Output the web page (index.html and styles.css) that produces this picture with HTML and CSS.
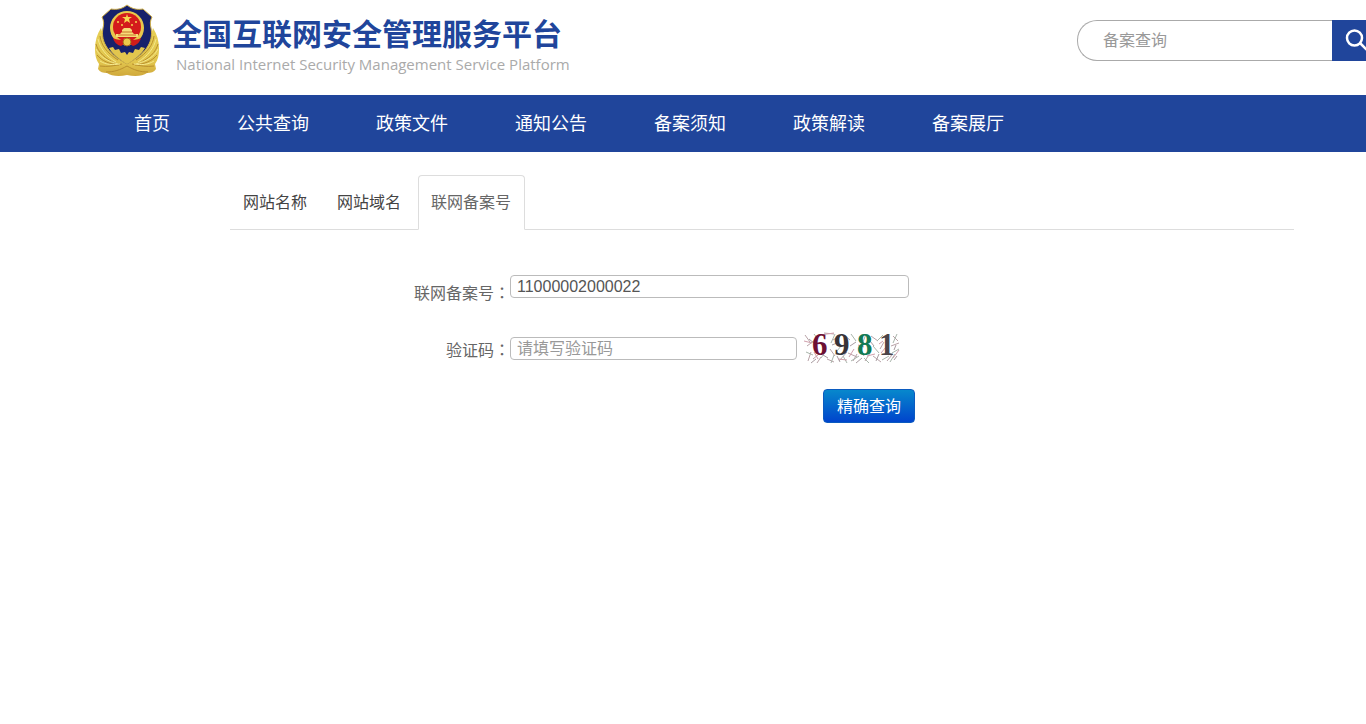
FILE: index.html
```html
<!DOCTYPE html>
<html lang="zh-CN">
<head>
  <meta charset="utf-8">
  <title>全国互联网安全管理服务平台</title>
  <link rel="stylesheet" href="styles.css">
</head>
<body>
  <header class="header">
    <a class="logo" href="#">
      <svg class="emblem" viewBox="0 0 66 74" aria-hidden="true">
        <defs>
          <linearGradient id="gold" x1="0" y1="0" x2="0" y2="1">
            <stop offset="0" stop-color="#e6cf55"/>
            <stop offset="0.7" stop-color="#e2c64e"/>
            <stop offset="1" stop-color="#d0a93c"/>
          </linearGradient>
        </defs>
        <!-- branches -->
        <path d="M7 24C3 30 1 37 1 45c0 6 1 11 4 15l-1 5c2 3 5 4 9 4 4 3 12 4 20 2 8 2 16 1 20-2 4 0 7-1 9-4l-1-5c3-4 4-9 4-15 0-8-2-15-6-21l-5 18-21 18-21-18z" fill="url(#gold)"/>
        <g fill="none" stroke="#b98f2e" stroke-width="1">
          <path d="M6 32c1 9 7 17 18 24M2 40c2 8 9 15 21 20M3 51c5 6 12 9 22 10M6 62c7 1 14 0 22-2M12 68c8 0 14-2 21-6"/>
          <path d="M60 32c-1 9-7 17-18 24M64 40c-2 8-9 15-21 20M63 51c-5 6-12 9-22 10M60 62c-7 1-14 0-22-2M54 68c-8 0-14-2-21-6"/>
        </g>
        <g fill="none" stroke="#f5e88c" stroke-width="1">
          <path d="M4 35c2 9 8 17 18 23M2 45c4 8 11 12 22 15M6 57c6 4 13 4 20 3"/>
          <path d="M62 35c-2 9-8 17-18 23M64 45c-4 8-11 12-22 15M60 57c-6 4-13 4-20 3"/>
        </g>
        <!-- shield -->
        <path d="M33 1c5 4 10 5 16 4l9 8c-2 4-2 7-1 11 3 15-7 27-24 36C16 51 6 39 9 24c1-4 1-7-1-11l9-8c6 1 11 0 16-4z" fill="#17216b" stroke="#cfae45" stroke-width="1"/>
        <path d="M15 44l4-1 2 3 4-1 2 4 4-1 2 3 2-3 4 1 2-4 4 1 2-3 4 1c-4 7-10 11-18 16-8-5-14-9-18-16z" fill="#e2c64e"/>
        <circle cx="33" cy="24" r="17" fill="#e8c84c"/>
        <circle cx="33" cy="23" r="14" fill="#d41a1c"/>
        <path d="M33 10l1 3h4l-3 2 1 4-3-2-3 2 1-4-3-2h4z" fill="#f6d650"/>
        <g fill="#f6d650">
          <circle cx="24" cy="18" r="1"/><circle cx="28" cy="21" r="1"/>
          <circle cx="38" cy="21" r="1"/><circle cx="42" cy="18" r="1"/>
        </g>
        <path d="M22 33v-3h4l2-2v-2l2-2h6l2 2v2l2 2h4v3z" fill="#f7dc78"/>
        <path d="M28 28h10M24 31h18" stroke="#c9762c" stroke-width="1"/>
        <path d="M19 34c4 2 7 2 10 1h8c3 1 6 1 10-1-1 4-4 7-8 8l-3-2h-6l-3 2c-4-1-7-4-8-8z" fill="#cf1c1b"/>
        <circle cx="33" cy="38" r="4" fill="#edc94b" stroke="#a66c19"/>
      </svg>
      <span class="logo-text">
        <span class="logo-cn">全国互联网安全管理服务平台</span>
        <span class="logo-en">National Internet Security Management Service Platform</span>
      </span>
    </a>
    <form class="search">
      <input class="search-input" type="text" placeholder="备案查询" aria-label="备案查询">
      <button class="search-btn" type="button" aria-label="搜索">
        <svg width="24" height="24" viewBox="0 0 24 24" fill="none" stroke="#fff" stroke-width="2.500">
          <circle cx="9.500" cy="10" r="7.500"/>
          <path d="M15 15l7 7"/>
        </svg>
      </button>
    </form>
  </header>

  <nav class="nav">
    <a href="#">首页</a>
    <a href="#">公共查询</a>
    <a href="#">政策文件</a>
    <a href="#">通知公告</a>
    <a href="#">备案须知</a>
    <a href="#">政策解读</a>
    <a href="#">备案展厅</a>
  </nav>

  <main class="main">
    <div class="tabs">
      <a class="tab" href="#">网站名称</a>
      <a class="tab" href="#">网站域名</a>
      <a class="tab active" href="#">联网备案号</a>
    </div>

    <form class="query">
      <div class="row">
        <label for="recordcode">联网备案号<span class="colon" lang="zh-TW">：</span></label>
        <input class="text" id="recordcode" type="text" value="11000002000022">
      </div>
      <div class="row">
        <label for="ver">验证码<span class="colon" lang="zh-TW">：</span></label>
        <input class="text text-code" id="ver" type="text" placeholder="请填写验证码">
        <svg class="captcha" viewBox="0 0 96 32" role="img" aria-label="验证码图片">
          <g fill="none" stroke-width="1">
            <path stroke="#b9a3a8" d="M1 3l5 7M3 14l8-6M4 29l3-9M9 27l6-5M20 1l10 1M13 31l4-6M23 27l7 3M29 8l7-4M26 17l5 7M35 29l8-9M40 3l6 5M49 29l4-7M44 21l9 4M56 4l4 8M61 29l5-8M67 4l7 5M69 24l8 6M76 17l4-7M83 29l5-6M89 4l5 5M87 14l8-3"/>
            <path stroke="#a9b5ab" d="M2 20l7 3M10 2l4 5M17 26l5-7M27 31l3-8M31 2l-4 9M38 13l-6 7M43 31l-4-7M47 2l5 7M55 24l-8 5M62 2l-3 8M65 31l-5-5M69 14l6 7M79 3l-6 6M78 28l7-4M84 3l-2 7M91 22l-5 8M93 2l-4 9M95 17l-7 4"/>
            <path stroke="#a89ca1" d="M5 7l6 5M7 31l5-4M19 23l5 3M28 13l5-2M33 24l3 6M46 14l6-4M52 31l6-5M57 18l3 6M66 9l4 5M72 29l3-7M81 21l6 2M92 13l-2 5M90 28l3-4"/>
            <path stroke="#d0a0ac" d="M0 9l8 2M16 3l14-2M10 20l4 7M34 27l9 1M45 25l5-8M54 13l6 2M63 24l8-2M75 12l4-3M82 15l-5 6M89 26l6-8"/>
          </g>
          <g class="digits">
            <text x="8" y="23" fill="#6d1034">6</text>
            <text x="30" y="23" fill="#383438">9</text>
            <text x="53" y="23" fill="#127a55">8</text>
            <text x="75" y="23" fill="#4b4448">1</text>
          </g>
        </svg>
      </div>
      <div class="actions">
        <button class="btn" type="button">精确查询</button>
      </div>
    </form>
  </main>
</body>
</html>
```

FILE: styles.css
```css
* {
    box-sizing: border-box;
}

body {
    margin: 0;
    overflow-x: hidden;
    background: #fff;
    color: #666;
    font-family: "Liberation Sans", "Noto Sans CJK SC", sans-serif;
    font-size: 16px;
    line-height: 24px;
}

a {
    color: inherit;
    text-decoration: none;
}

input,
button {
    font: inherit;
}

/* header */
.header {
    display: flex;
    justify-content: space-between;
    align-items: flex-start;
    min-width: 1382px;
    height: 95px;
    padding-left: 94px;
}

.logo {
    display: flex;
    gap: 12px;
    padding-top: 4px;
}

.emblem {
    width: 66px;
    height: 74px;
}

.logo-text {
    display: flex;
    flex-direction: column;
    padding-top: 7px;
}

.logo-cn {
    color: #20459b;
    font-size: 30px;
    font-weight: bold;
    line-height: 42px;
    font-family: "Noto Sans CJK SC", sans-serif;
}

.logo-en {
    padding-left: 4px;
    color: #aaa;
    font-family: "Open Sans", sans-serif;
    font-size: 15px;
    line-height: 22px;
}

.search {
    display: flex;
    width: 305px;
    height: 41px;
    margin-top: 20px;
}

.search-input {
    flex: 1;
    min-width: 0;
    padding: 0 25px;
    border: 1px solid #aaa;
    border-right: 0;
    border-radius: 20px 0 0 20px;
    outline: 0;
}

.search-input::placeholder,
.text::placeholder {
    color: #999;
}

.search-btn {
    width: 50px;
    padding: 8px 12px;
    border: 0;
    background: #20459b;
    cursor: pointer;
}

/* navigation */
.nav {
    display: flex;
    gap: 67px;
    padding: 2px 134px 0;
    background: #20459b;
    color: #fff;
    font-size: 18px;
    line-height: 55px;
    white-space: nowrap;
}

/* tabs */
.main {
    margin: 23px 72px 0 230px;
}

.tabs {
    display: flex;
    gap: 4px;
    border-bottom: 1px solid #ddd;
}

.tab {
    margin-bottom: -1px;
    padding: 15px 13px 14px 12px;
    border: 1px solid transparent;
    border-radius: 4px 4px 0 0;
    color: #444;
}

.tab + .tab {
    margin-left: -1px;
}

.tab.active {
    border-color: #ddd;
    border-bottom-color: #fff;
    background: #fff;
    color: #666;
}

/* query form */
.query {
    width: 685px;
    padding-top: 45px;
}

.row {
    display: flex;
    align-items: flex-start;
    height: 57px;
}

.row label {
    width: 280px;
    padding-top: 5px;
    text-align: right;
}

.colon {
    font-family: "Noto Sans CJK TC", sans-serif;
}

.text {
    width: 399px;
    height: 23px;
    padding: 0 6px;
    border: 1px solid #bbb;
    border-radius: 4px;
    color: #555;
    line-height: 20px;
}

.text-code {
    width: 287px;
    margin-top: 5px;
}

.captcha {
    width: 96px;
    height: 32px;
    margin-left: 7px;
    overflow: visible;
}

.digits {
    font-family: "Liberation Serif", serif;
    font-size: 31px;
    font-weight: bold;
}

.actions {
    display: flex;
    justify-content: flex-end;
}

.btn {
    padding: 5px 13px 3px;
    border: 1px solid #0b5bc0;
    border-radius: 4px;
    background: linear-gradient(#0788cc, #0044cc);
    color: #fff;
    cursor: pointer;
}
```
